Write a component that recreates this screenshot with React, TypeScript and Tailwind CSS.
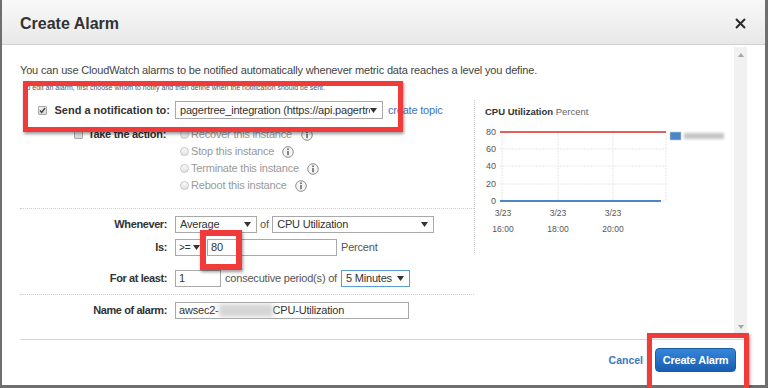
import React from 'react';

const Caret: React.FC = () => (
  <svg width="7" height="5" viewBox="0 0 7 5" className="shrink-0">
    <path d="M0 0h7L3.5 5z" fill="#333" />
  </svg>
);

interface SelectProps {
  value: string;
  className?: string;
  focused?: boolean;
  textClass?: string;
}

const Select: React.FC<SelectProps> = ({ value, className = '', focused, textClass = 'text-[11px]' }) => (
  <div
    className={`flex items-center h-[17px] bg-white border ${
      focused ? 'border-[#5b9dd9]' : 'border-[#a9a9a9]'
    } ${className}`}
  >
    <span className={`flex-1 overflow-hidden whitespace-nowrap tracking-[-0.2px] text-[#333] leading-[15px] ${textClass}`}>
      {value}
    </span>
    <Caret />
  </div>
);

const Input: React.FC<{ value?: string; className?: string; children?: React.ReactNode }> = ({
  value,
  className = '',
  children,
}) => (
  <div
    className={`flex items-center h-[17px] bg-white border border-[#a9a9a9] pl-[3px] text-[11px] tracking-[-0.2px] text-[#333] leading-[15px] whitespace-nowrap overflow-hidden ${className}`}
  >
    {children ?? value}
  </div>
);

const InfoIcon: React.FC = () => (
  <svg width="12" height="12" viewBox="0 0 12 12" className="shrink-0">
    <circle cx="6" cy="6" r="5.3" fill="#f6f6f6" stroke="#8c8c8c" />
    <rect x="5.2" y="5" width="1.6" height="4.2" fill="#6a6a6a" />
    <circle cx="6" cy="3.3" r="0.95" fill="#6a6a6a" />
  </svg>
);

const Radio: React.FC = () => (
  <span className="w-[9px] h-[9px] rounded-full border border-[#c6c6c6] bg-gradient-to-b from-[#fbfbfb] to-[#e2e2e2] shrink-0" />
);

const Checkbox: React.FC<{ checked?: boolean }> = ({ checked }) => (
  <span className="w-[9px] h-[9px] border border-[#a8a8a8] bg-gradient-to-b from-[#f2f2f2] to-[#d8d8d8] rounded-[1px] shrink-0 flex items-center justify-center">
    {checked && (
      <svg width="7" height="7" viewBox="0 0 7 7">
        <path d="M1 3.6l1.7 1.8L6 1" fill="none" stroke="#444" strokeWidth="1.4" />
      </svg>
    )}
  </span>
);

const actions = [
  { label: 'Stop this instance' },
  { label: 'Terminate this instance' },
  { label: 'Reboot this instance' },
];

const Chart: React.FC = () => {
  const rows = [
    { v: '80', y: 13 },
    { v: '60', y: 30 },
    { v: '40', y: 47 },
    { v: '20', y: 65 },
    { v: '0', y: 82 },
  ];
  const cols = [
    { x: 28, t: '16:00' },
    { x: 83, t: '18:00' },
    { x: 138, t: '20:00' },
  ];
  return (
    <svg width="256" height="125" viewBox="0 0 256 125" className="block">
      <defs>
        <filter id="blur" x="-20%" y="-50%" width="140%" height="200%">
          <feGaussianBlur stdDeviation="1.6" />
        </filter>
      </defs>
      {rows.map((r) => (
        <line key={r.v} x1="25" x2="191" y1={r.y} y2={r.y} stroke="#e6e6e6" strokeDasharray="2 1" />
      ))}
      {[27, 83, 138, 191].map((x) => (
        <line key={x} x1={x} x2={x} y1="13" y2="82" stroke="#e6e6e6" strokeDasharray="2 1" />
      ))}
      <line x1="25" x2="191" y1="13" y2="13" stroke="#d8302c" strokeWidth="1.3" />
      <line x1="25" x2="186" y1="82" y2="82" stroke="#4a86c8" strokeWidth="2" />
      {rows.map((r) => (
        <text
          key={r.v}
          x="21"
          y={r.y + 3}
          textAnchor="end"
          fontSize="9"
          fill="#555"
          fontFamily="'Liberation Sans', Arial, sans-serif"
        >
          {r.v}
        </text>
      ))}
      {cols.map((c) => (
        <g key={c.t} fontSize="8.5" fill="#555" fontFamily="'Liberation Sans', Arial, sans-serif" textAnchor="middle">
          <text x={c.x} y="97">3/23</text>
          <text x={c.x} y="113">{c.t}</text>
        </g>
      ))}
      <rect x="195" y="13" width="11" height="8" fill="#4a86c8" stroke="#c9c9c9" strokeWidth="0.6" />
      <rect x="209" y="14" width="40" height="6" fill="#c4c4c4" filter="url(#blur)" />
    </svg>
  );
};

const App: React.FC = () => {
  return (
    <div className="relative w-[768px] h-[388px] bg-[#6f6f6f] overflow-hidden font-['Liberation_Sans',Arial,sans-serif]">
      <div className="ml-[2px] w-[763px] h-[385px] bg-white flex flex-col">
        {/* header */}
        <div className="h-[45px] shrink-0 flex items-center justify-between pl-[18px] pr-[19px] border-b border-[#d2d2d2] bg-gradient-to-b from-[#f9f9f9] to-[#e8e8e8]">
          <h1 className="text-[16px] font-bold text-[#333] leading-[20px] mt-[3px]">Create Alarm</h1>
          <svg width="11" height="11" viewBox="0 0 11 11" className="mt-[3px]">
            <path d="M1 1l9 9M10 1l-9 9" stroke="#2b2b2b" strokeWidth="2" />
          </svg>
        </div>

        {/* body */}
        <div className="h-[294px] shrink-0 flex pl-[18px] pr-[18px]">
          <div className="flex-1 pt-[18px]">
            <p className="text-[11px] leading-[14px] text-[#444] tracking-[-0.16px] whitespace-nowrap">
              You can use CloudWatch alarms to be notified automatically whenever metric data reaches a level you define.
            </p>

            <div className="flex mt-[7px]">
              {/* left column */}
              <div className="w-[454px] shrink-0">
                <p className="text-[7px] leading-[8px] text-[#555] ml-[3px] whitespace-nowrap">
                  To edit an alarm, first choose whom to notify and then define when the notification should be sent.
                </p>

                <div className="flex items-center h-[18px] mt-[9px]">
                  <div className="w-[155px] shrink-0 flex items-center justify-end pr-[5px]">
                    <Checkbox checked />
                    <span className="ml-[8px] text-[11px] font-bold text-[#333] whitespace-nowrap">
                      Send a notification to:
                    </span>
                  </div>
                  <Select
                    value="pagertree_integration (https://api.pagertree.com/integration)"
                    className="w-[208px] h-[18px] pl-[4px] pr-[5px]"
                  />
                  <span className="ml-[5px] text-[11px] tracking-[-0.2px] text-[#3d72bd] whitespace-nowrap">create topic</span>
                </div>

                <div className="mt-[7px]">
                  <div className="flex items-center h-[17px]">
                    <div className="w-[160px] shrink-0 flex items-center justify-end pr-[14px]">
                      <Checkbox />
                      <span className="ml-[5px] text-[11px] font-bold tracking-[-0.3px] text-[#333] whitespace-nowrap">
                        Take the action:
                      </span>
                    </div>
                    <Radio />
                    <span className="ml-[2px] text-[11px] tracking-[-0.2px] text-[#999] whitespace-nowrap">
                      Recover this instance
                    </span>
                    <span className="ml-[9px] flex">
                      <InfoIcon />
                    </span>
                  </div>
                  {actions.map((a) => (
                    <div key={a.label} className="flex items-center h-[17px] pl-[160px]">
                      <Radio />
                      <span className="ml-[2px] text-[11px] tracking-[-0.2px] text-[#999] whitespace-nowrap">
                        {a.label}
                      </span>
                      <span className="ml-[8px] flex">
                        <InfoIcon />
                      </span>
                    </div>
                  ))}
                </div>

                <div className="mt-[14px] border-t border-dotted border-[#cfcfcf]" />

                <div className="flex items-center mt-[7px]">
                  <span className="w-[147px] text-right text-[11px] font-bold tracking-[-0.4px] text-[#333]">Whenever:</span>
                  <Select value="Average" className="ml-[8px] w-[82px] pl-[4px] pr-[5px]" />
                  <span className="ml-[3px] text-[11px] text-[#555]">of</span>
                  <Select value="CPU Utilization" className="ml-[3px] w-[162px] pl-[4px] pr-[5px]" />
                </div>

                <div className="flex items-center mt-[6px]">
                  <span className="w-[147px] text-right text-[11px] font-bold tracking-[-0.4px] text-[#333]">Is:</span>
                  <Select value=">=" textClass="text-[10px]" className="ml-[8px] w-[28px] pl-[3px] pr-[2px]" />
                  <Input value="80" className="ml-[4px] w-[130px]" />
                  <span className="ml-[4px] text-[11px] tracking-[-0.2px] text-[#555]">Percent</span>
                </div>

                <div className="flex items-center mt-[14px]">
                  <span className="w-[147px] text-right text-[11px] font-bold tracking-[-0.4px] text-[#333]">For at least:</span>
                  <Input value="1" className="ml-[8px] w-[46px]" />
                  <span className="ml-[4px] text-[11px] tracking-[-0.2px] text-[#555] whitespace-nowrap">
                    consecutive period(s) of
                  </span>
                  <Select value="5 Minutes" focused className="ml-[4px] w-[69px] pl-[4px] pr-[5px]" />
                </div>

                <div className="mt-[7px] border-t border-dotted border-[#cfcfcf]" />

                <div className="flex items-center mt-[7px]">
                  <span className="w-[147px] text-right text-[11px] font-bold tracking-[-0.4px] text-[#333]">Name of alarm:</span>
                  <Input className="ml-[8px] w-[234px]">
                    <span>awsec2-</span>
                    <span className="w-[54px] h-[13px] bg-[#d6d6d6] blur-[2px] shrink-0" />
                    <span>CPU-Utilization</span>
                  </Input>
                </div>
              </div>

              {/* chart panel */}
              <div className="w-[256px] h-[153px] mt-[16px] border-l border-dotted border-[#cccccc]">
                <div className="pl-[10px] pt-[5px] text-[9.5px] leading-[14px] text-[#333] whitespace-nowrap">
                  <span className="font-bold">CPU Utilization</span>{' '}
                  <span className="text-[#666]">Percent</span>
                </div>
                <Chart />
              </div>
            </div>
          </div>

          {/* scrollbar */}
          <div className="w-[13px] shrink-0 mt-[2px] mb-[4px] bg-[#f1f1f1] flex flex-col items-center justify-between py-[6px]">
            <svg width="6" height="4" viewBox="0 0 6 4">
              <path d="M0 4h6L3 0z" fill="#a6a6a6" />
            </svg>
            <svg width="6" height="4" viewBox="0 0 6 4">
              <path d="M0 0h6L3 4z" fill="#a6a6a6" />
            </svg>
          </div>
        </div>

        {/* footer */}
        <div className="flex-1 mx-[18px] border-t border-[#d6d6d6] flex justify-end items-start pt-[8px] pr-[11px]">
          <span className="mt-[5px] text-[10.5px] font-bold text-[#3b78c4]">Cancel</span>
          <button className="ml-[12px] h-[24px] w-[81px] rounded-[4px] border border-[#1b5ca8] bg-gradient-to-b from-[#3586da] to-[#185eb2] text-white text-[11px] font-bold tracking-[-0.2px]">
            Create Alarm
          </button>
        </div>
      </div>

      {/* annotation frames */}
      <div className="absolute left-[23px] top-[81px] w-[380px] h-[51px] border-[5px] border-[#f13b3b] shadow-[1px_2px_3px_rgba(0,0,0,0.4)] pointer-events-none" />
      <div className="absolute left-[200px] top-[230px] w-[42px] h-[40px] border-[6px] border-[#f13b3b] shadow-[1px_2px_3px_rgba(0,0,0,0.4)] pointer-events-none" />
      <div className="absolute left-[647px] top-[333px] w-[102px] h-[62px] border-[5px] border-[#f13b3b] shadow-[1px_2px_3px_rgba(0,0,0,0.4)] pointer-events-none" />
    </div>
  );
};

export default App;
